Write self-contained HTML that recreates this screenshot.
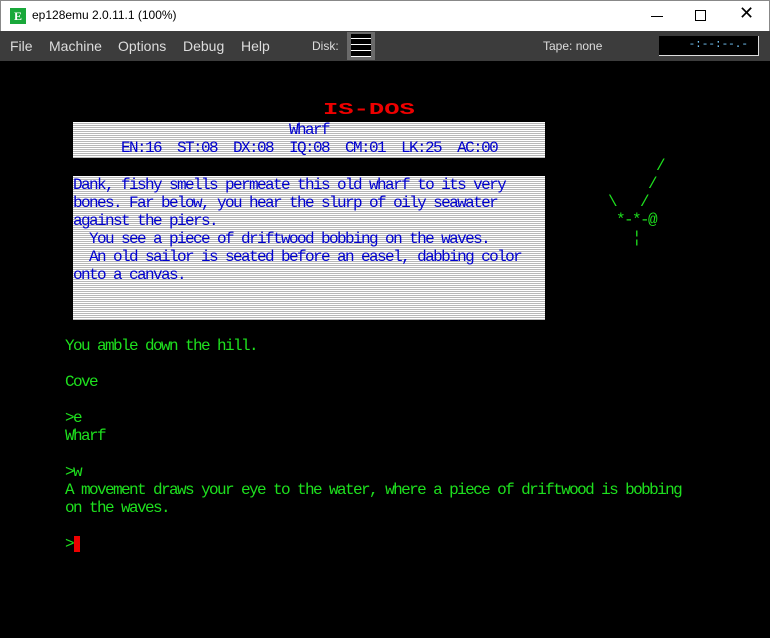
<!DOCTYPE html>
<html><head><meta charset="utf-8"><style>
*{margin:0;padding:0;box-sizing:border-box}
body{width:770px;height:638px;background:#000;position:relative;overflow:hidden;font-family:"Liberation Sans",sans-serif}
.title{position:absolute;left:0;top:0;width:770px;height:31px;background:#fff;border:1px solid #888;border-bottom:none}
.menu{position:absolute;left:0;top:31px;width:770px;height:30px;background:#3c3c3c;color:#ddd;font-size:14px}
.menu span{position:absolute;top:7px}
.scr{position:absolute;left:0;top:61px;width:768px;height:577px;background:#000}
.t{position:absolute;font-family:"Liberation Mono",monospace;font-size:16px;letter-spacing:-1.6px;white-space:pre;line-height:18px}
.g{color:#1ee01e}
.b{color:#0000d0}
.panel{position:absolute;left:73px;width:472px;background:repeating-linear-gradient(#fff 0 1px,#b8b8b8 1px 2px)}
</style></head><body>
<div class="title">
 <div style="position:absolute;left:9px;top:7px;width:16px;height:16px;background:#19a83a;color:#fff;font:bold 12px 'Liberation Serif',serif;text-align:center;line-height:16px">E</div>
 <div style="position:absolute;left:31px;top:7px;font-size:12px;color:#000">ep128emu 2.0.11.1 (100%)</div>
 <div style="position:absolute;left:650px;top:15px;width:12px;height:1px;background:#000"></div>
 <div style="position:absolute;left:694px;top:9px;width:11px;height:11px;border:1px solid #000"></div>
 <div style="position:absolute;left:738px;top:2px;font-size:18px;color:#000">✕</div>
</div>
<div class="menu">
 <span style="left:10px">File</span><span style="left:49px">Machine</span><span style="left:118px">Options</span><span style="left:183px">Debug</span><span style="left:241px">Help</span>
 <span style="left:312px;font-size:12px;top:8px">Disk:</span>
 <div style="position:absolute;left:347px;top:1px;width:28px;height:28px;background:#6a6a6a;padding:2px 4px">
  <div style="height:5px;background:#000;border-bottom:1px solid #fff"></div>
  <div style="height:6px;background:#000;border-bottom:1px solid #fff"></div>
  <div style="height:6px;background:#000;border-bottom:1px solid #fff"></div>
  <div style="height:6px;background:#000;border-bottom:1px solid #fff"></div>
 </div>
 <span style="left:543px;font-size:12px;top:8px">Tape: none</span>
 <div style="position:absolute;left:659px;top:5px;width:100px;height:20px;background:#000;border-right:1px solid #ddd;border-bottom:1px solid #ddd;color:#7cf;font:11px 'Liberation Mono',monospace;text-align:right;padding:3px 10px 0 0">-:--:--.-</div>
</div>
<div class="scr"></div>
<div class="t" style="left:323px;top:102px;color:#e00;font-weight:bold;font-size:17px;letter-spacing:0;transform:scaleX(1.5);transform-origin:0 0">IS-DOS</div>
<div class="panel" style="top:122px;height:36px"></div>
<div class="t b" style="left:289px;top:121px">Wharf</div>
<div class="t b" style="left:121px;top:139px">EN:16  ST:08  DX:08  IQ:08  CM:01  LK:25  AC:00</div>
<div class="panel" style="top:176px;height:144px"></div>
<div class="t b" style="left:73px;top:176px">Dank, fishy smells permeate this old wharf to its very
bones. Far below, you hear the slurp of oily seawater
against the piers.
  You see a piece of driftwood bobbing on the waves.
  An old sailor is seated before an easel, dabbing color
onto a canvas.</div>
<div class="t g" style="left:608px;top:157px">      /
     /
\   /
 *-*-@
   ¦</div>
<div class="t g" style="left:65px;top:337px">You amble down the hill.

Cove

&gt;e
Wharf

&gt;w
A movement draws your eye to the water, where a piece of driftwood is bobbing
on the waves.

&gt;</div>
<div style="position:absolute;left:74px;top:536px;width:6px;height:16px;background:#e00"></div>
</body></html>
